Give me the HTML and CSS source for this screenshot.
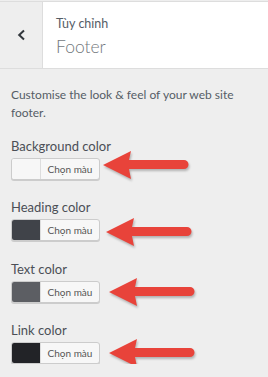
FILE: index.html
```html
<!DOCTYPE html>
<html lang="vi">
<head>
  <meta charset="UTF-8">
  <meta name="viewport" content="width=device-width, initial-scale=1.0">
  <title>Tùy chỉnh Footer</title>
  <link rel="stylesheet" href="styles.css">
</head>
<body>
  <div class="section-header">
    <button class="back" aria-label="Quay lại">
      <svg width="10" height="12" viewBox="0 0 10 12"><path d="M7 1.5 L2.2 6 L7 10.5" fill="none" stroke="#32373c" stroke-width="2"/></svg>
    </button>
    <div class="section-title">
      <span class="action">Tùy chỉnh</span>
      <h3>Footer</h3>
    </div>
  </div>

  <div class="controls">
    <p class="description">Customise the look &amp; feel of your web site footer.</p>

    <div class="control">
      <span class="control-title">Background color</span>
      <div class="picker">
        <button class="color-btn"><span class="swatch" style="background:#f7f7f7"></span><span class="pick">Chọn màu</span></button>
        <svg class="arrow a1" width="94" height="34" viewBox="0 0 94 34"><path d="M2 15 L30 1 L28 10 L83 10 A4.5 4.5 0 0 1 83 19 L28 19 L30 29 Z" fill="#e8433a"/></svg>
      </div>
    </div>

    <div class="control">
      <span class="control-title">Heading color</span>
      <div class="picker">
        <button class="color-btn"><span class="swatch" style="background:#404349"></span><span class="pick">Chọn màu</span></button>
        <svg class="arrow a2" width="94" height="34" viewBox="0 0 94 34"><path d="M2 15 L30 1 L28 10 L83 10 A4.5 4.5 0 0 1 83 19 L28 19 L30 29 Z" fill="#e8433a"/></svg>
      </div>
    </div>

    <div class="control">
      <span class="control-title">Text color</span>
      <div class="picker">
        <button class="color-btn"><span class="swatch" style="background:#5c5e63"></span><span class="pick">Chọn màu</span></button>
        <svg class="arrow a3" width="94" height="34" viewBox="0 0 94 34"><path d="M2 15 L30 1 L28 10 L83 10 A4.5 4.5 0 0 1 83 19 L28 19 L30 29 Z" fill="#e8433a"/></svg>
      </div>
    </div>

    <div class="control">
      <span class="control-title">Link color</span>
      <div class="picker">
        <button class="color-btn"><span class="swatch" style="background:#222327"></span><span class="pick">Chọn màu</span></button>
        <svg class="arrow a3" width="94" height="34" viewBox="0 0 94 34"><path d="M2 15 L30 1 L28 10 L83 10 A4.5 4.5 0 0 1 83 19 L28 19 L30 29 Z" fill="#e8433a"/></svg>
      </div>
    </div>
  </div>
</body>
</html>
```

FILE: styles.css
```css
body {
  margin: 0;
  background: #eeeeee;
  font-family: Lato, "Open Sans", sans-serif;
  color: #555d66;
}
.section-header {
  display: flex;
  height: 66px;
  margin-top: 1px;
  border-top: 1px solid #dddddd;
  border-bottom: 1px solid #dddddd;
  background: #fff;
}
.back {
  width: 43px;
  border: none;
  border-right: 1px solid #dddddd;
  background: #eeeeee;
  display: flex;
  align-items: center;
  justify-content: center;
  padding: 0 0 0 2px;
}
.section-title {
  padding: 14px 13px;
  display: flex;
  flex-direction: column;
}
.action {
  font-size: 12.5px;
  line-height: 16px;
  color: #555d66;
}
.section-title h3 {
  margin: 2px 0 0;
  font-size: 17.5px;
  font-weight: 300;
  line-height: 26px;
  color: #72777c;
}
.controls {
  padding: 17px 11px 0;
}
.description {
  margin: 0 0 14px;
  font-size: 12px;
  line-height: 18px;
}
.control {
  margin-bottom: 17.3px;
}
.control:last-child {
  margin-bottom: 0;
}
.control-title {
  display: block;
  font-size: 13px;
  line-height: 20px;
  color: #4b4f56;
  margin-bottom: 2px;
}
.picker {
  position: relative;
  height: 22px;
}
.color-btn {
  display: flex;
  height: 22px;
  padding: 0;
  border: 1px solid #cccccc;
  border-radius: 3px;
  background: #f7f7f7;
  box-shadow: 0 1px 0 #cccccc;
  overflow: hidden;
  font-family: inherit;
}
.swatch {
  width: 28px;
  height: 100%;
  border-right: 1px solid #dddddd;
}
.pick {
  width: 58px;
  text-align: center;
  font-size: 10px;
  line-height: 20px;
  color: #555;
}
.arrow {
  position: absolute;
  filter: drop-shadow(1px 2px 1px rgba(0, 0, 0, 0.25));
}
.a1 {
  left: 90px;
  top: -8px;
}
.a2 {
  left: 93px;
  top: -2px;
}
.a3 {
  left: 96px;
  top: -4px;
}
```
